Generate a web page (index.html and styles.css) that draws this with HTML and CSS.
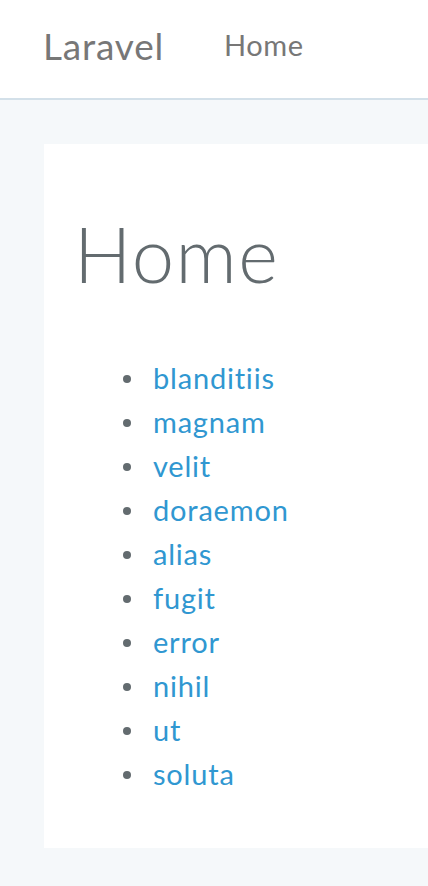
FILE: index.html
```html
<!DOCTYPE html>
<html lang="en">
<head>
<meta charset="utf-8">
<title>Laravel</title>
<link rel="stylesheet" href="styles.css">
</head>
<body>
<nav class="navbar">
  <a class="brand" href="#">Laravel</a>
  <a class="nav-link" href="#">Home</a>
</nav>
<main class="main">
  <section class="card">
    <h1 class="title">Home</h1>
    <ul class="items">
      <li><a href="#">blanditiis</a></li>
      <li><a href="#">magnam</a></li>
      <li><a href="#">velit</a></li>
      <li><a href="#">doraemon</a></li>
      <li><a href="#">alias</a></li>
      <li><a href="#">fugit</a></li>
      <li><a href="#">error</a></li>
      <li><a href="#">nihil</a></li>
      <li><a href="#">ut</a></li>
      <li><a href="#">soluta</a></li>
    </ul>
  </section>
</main>
</body>
</html>
```

FILE: styles.css
```css
* { box-sizing: border-box; }
html, body { margin: 0; padding: 0; }
body {
  background: #f5f8fa;
  font-family: Lato, "Open Sans", sans-serif;
  color: #636b6f;
  font-size: 29px;
  line-height: 1.6;
  overflow-x: hidden;
}
a { text-decoration: none; }
.navbar {
  height: 100px;
  background: #fff;
  border-bottom: 2px solid #d3e0e9;
  display: flex;
  align-items: center;
  padding: 0 0 2px 43px;
}
.brand {
  color: #777;
  font-size: 37px;
  letter-spacing: 0.8px;
  margin-right: 60px;
  margin-top: -4px;
}
.nav-link {
  color: #777;
  font-size: 29px;
  letter-spacing: 0.6px;
  margin-top: -6px;
}
.main {
  padding: 44px 0 0 44px;
}
.card {
  background: #fff;
  padding: 30px;
  height: 704px;
}
.title {
  font-size: 76px;
  font-weight: 300;
  letter-spacing: 1.5px;
  line-height: 1.1;
  margin: 38px 0 0 0;
  color: #636b6f;
}
.items {
  margin: 60px 0 20px 0;
  padding: 0;
  list-style: none;
}
.items li {
  line-height: 44px;
  display: flex;
  align-items: center;
}
.items li::before {
  content: "";
  width: 8px;
  height: 8px;
  border-radius: 50%;
  background: #636b6f;
  margin: 2px 22px 0 49px;
  flex: none;
}
.items a { color: #3097d1; letter-spacing: 0.8px; }
```
